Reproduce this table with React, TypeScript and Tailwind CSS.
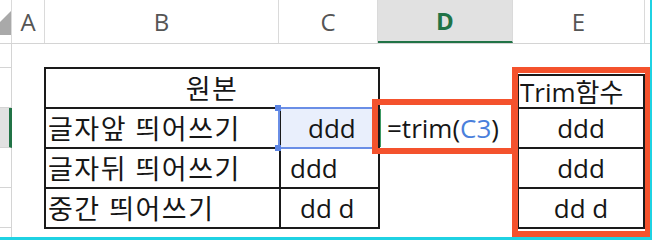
import React from "react";

const FONT = "font-['Open_Sans','Noto_Sans_CJK_KR',sans-serif]";
const KO = "text-[27px] tracking-[1.5px]";

function ColHead({ label, w, active }: { label: string; w: string; active?: boolean }) {
    return (
        <div
            className={`${w} h-[43px] flex items-center justify-center border-r border-[#dadada] text-[24px] ${
                active ? "bg-[#e1e1e1] border-b-2 border-b-[#217346] text-[#217346] font-bold" : "text-[#555555]"
            }`}
        >
            {label}
        </div>
    );
}

export default function App() {
    return (
        <div className={`relative w-[652px] h-[240px] overflow-hidden bg-white box-border border-r-2 border-b-[3px] border-[#1fd2e3] ${FONT} text-[#161616]`}>
            {/* column headers */}
            <div className="flex h-[44px] border-b border-[#d4d4d4]">
                <div className="w-[12px] h-[43px] border-r border-[#dadada]">
                    <svg width="11" height="43" viewBox="0 0 11 43">
                        <polygon points="0,22 11,11 11,35 0,35" fill="#a9a9a9" />
                    </svg>
                </div>
                <ColHead label="A" w="w-[33px]" />
                <ColHead label="B" w="w-[234px]" />
                <ColHead label="C" w="w-[99px]" />
                <ColHead label="D" w="w-[135px]" active />
                <ColHead label="E" w="w-[132px]" />
                <div className="flex-1" />
            </div>

            <div className="flex h-[193px]">
                {/* row headers */}
                <div className="w-[12px] flex flex-col">
                    <div className="h-[24px] border-b border-r border-[#d4d4d4]" />
                    <div className="h-[40px] border-b border-r border-[#d4d4d4]" />
                    <div className="h-[40px] bg-[#e1e1e1] border-b border-[#d4d4d4] border-r-[3px] border-r-[#217346]" />
                    <div className="h-[40px] border-b border-r border-[#d4d4d4]" />
                    <div className="h-[40px] border-b border-r border-[#d4d4d4]" />
                    <div className="flex-1 border-r border-[#d4d4d4]" />
                </div>

                {/* sheet */}
                <div className="flex-1 flex items-start pl-[32px] pt-[23px] text-[26px] leading-none">
                    <div className="w-[336px] border-2 border-[#1a1a1a]">
                        <div className={`h-[40px] border-b-2 border-[#1a1a1a] flex items-center justify-center ${KO}`}>원본</div>
                        <div className="h-[40px] border-b-2 border-[#1a1a1a] flex">
                            <div className={`w-[235px] border-r-2 border-[#1a1a1a] flex items-center pl-[2px] ${KO}`}>글자앞 띄어쓰기</div>
                            <div className="flex-1 bg-[#e9effc] flex items-center pl-[27px]">ddd</div>
                        </div>
                        <div className="h-[40px] border-b-2 border-[#1a1a1a] flex">
                            <div className={`w-[235px] border-r-2 border-[#1a1a1a] flex items-center pl-[2px] ${KO}`}>글자뒤 띄어쓰기</div>
                            <div className="flex-1 flex items-center pl-[9px]">ddd</div>
                        </div>
                        <div className="h-[38px] flex">
                            <div className={`w-[235px] border-r-2 border-[#1a1a1a] flex items-center pl-[2px] ${KO}`}>중간 띄어쓰기</div>
                            <div className="flex-1 flex items-center pl-[19px]">dd d</div>
                        </div>
                    </div>

                    <div className="w-[137px] mt-[42px]">
                        <div className="h-[38px] flex items-center pl-[6px] border-l border-[#3c9a63]">
                            =trim(<span className="text-[#4a7fdc]">C3</span>)
                        </div>
                    </div>

                    <div className="w-[128px] mt-[7px] border-2 border-[#1a1a1a]">
                        <div className="h-[33px] border-b-2 border-[#1a1a1a] flex items-center pl-[1px]">Trim함수</div>
                        <div className="h-[40px] border-b-2 border-[#1a1a1a] flex items-center justify-center">ddd</div>
                        <div className="h-[40px] border-b-2 border-[#1a1a1a] flex items-center justify-center">ddd</div>
                        <div className="h-[38px] flex items-center justify-center">dd d</div>
                    </div>
                </div>
            </div>

            {/* selection on C3 */}
            <div className="absolute left-[278px] top-[107px] w-[100px] h-[42px] border-2 border-[#6a8ee6] pointer-events-none" />
            <div className="absolute left-[275px] top-[105px] w-[6px] h-[6px] bg-[#5b84e4]" />
            <div className="absolute left-[275px] top-[145px] w-[6px] h-[6px] bg-[#5b84e4]" />

            {/* annotation boxes */}
            <div className="absolute left-[372px] top-[99px] w-[145px] h-[55px] border-[6px] border-[#f4522d] pointer-events-none" />
            <div className="absolute left-[512px] top-[67px] w-[138px] h-[170px] border-[6px] border-r-[5px] border-[#f4522d] pointer-events-none" />
        </div>
    );
}
